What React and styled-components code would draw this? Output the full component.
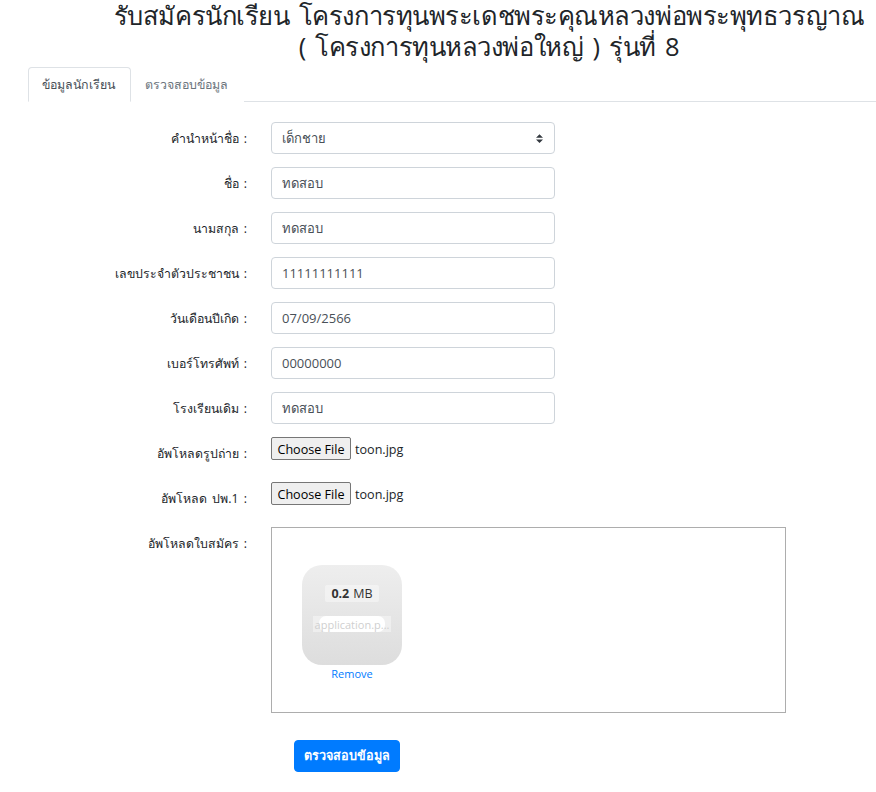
import React from 'react'
import styled, { createGlobalStyle } from 'styled-components'

const GlobalStyle = createGlobalStyle`
    * { box-sizing: border-box; }
    body {
        margin: 0;
        background: #fff;
        color: #212529;
        font-family: "Open Sans", "Noto Sans", "Liberation Sans", sans-serif;
        font-size: 14px;
    }
`;

const Page = styled.div`
    width: 876px;
    height: 792px;
    overflow: hidden;
    padding-left: 28px;
`;
const Title = styled.h3`
    margin: 0;
    padding-left: 74px;
    height: 67px;
    font-size: 25.5px;
    font-weight: 500;
    letter-spacing: -0.45px;
    word-spacing: 3.2px;
    white-space: nowrap;
    text-align: center;
`;
const TitleLine = styled.div`
    height: 31px;
    line-height: 31px;
`;
const Tabs = styled.div`
    display: flex;
    height: 35px;
    border-bottom: 1px solid #dee2e6;
`;
const Tab = styled.div`
    height: 35px;
    padding: 0 15px 0 13px;
    display: flex;
    align-items: center;
    font-size: 12.4px;
    color: ${({active}) => (active ? '#495057' : '#6c757d')};
    background: #fff;
    border: 1px solid ${({active}) => (active ? '#dee2e6' : 'transparent')};
    border-bottom-color: ${({active}) => (active ? '#fff' : 'transparent')};
    border-radius: 4px 4px 0 0;
`;
const Form = styled.form`
    padding-top: 20px;
    display: flex;
    flex-direction: column;
`;
const Row = styled.div`
    display: grid;
    grid-template-columns: 219px 1fr;
    column-gap: 24px;
    height: ${({h}) => h || 45}px;
`;
const Label = styled.label`
    text-align: right;
    font-size: 12.3px;
    word-spacing: 2px;
    line-height: 20px;
    padding-top: 7px;
    color: #212529;
`;
const Input = styled.input`
    display: block;
    width: 284px;
    height: 32px;
    padding: 0 10px;
    font: inherit;
    font-size: 13px;
    color: #495057;
    background: #fff;
    border: 1px solid #ced4da;
    border-radius: 4px;
`;
const Select = styled.select`
    display: block;
    width: 284px;
    height: 32px;
    padding: 0 10px;
    font: inherit;
    font-size: 13px;
    color: #495057;
    border: 1px solid #ced4da;
    border-radius: 4px;
    appearance: none;
    background: #fff url("data:image/svg+xml,%3csvg xmlns='http://www.w3.org/2000/svg' width='4' height='5' viewBox='0 0 4 5'%3e%3cpath fill='%23343a40' d='M2 0L0 2h4zm0 5L0 3h4z'/%3e%3c/svg%3e") no-repeat right 11px center / 7px 9px;
`;
const FileField = styled.div`
    display: flex;
    align-items: flex-start;
    gap: 4px;
    font-family: "Open Sans", sans-serif;
    font-size: 12.6px;
    line-height: 25px;
    color: #212529;
`;
const FileButton = styled.button`
    width: 80px;
    height: 23px;
    padding: 1px 0 0;
    font: inherit;
    line-height: 21px;
    color: #000;
    background: #efefef;
    border: 1px solid #767676;
    border-radius: 2px;
`;
const DropArea = styled.div`
    width: 515px;
    height: 186px;
    padding: 37px 30px;
    border: 1px solid #adadad;
`;
const Preview = styled.div`
    width: 100px;
    display: flex;
    flex-direction: column;
    align-items: center;
`;
const Thumb = styled.div`
    width: 100px;
    height: 100px;
    padding-top: 20px;
    border-radius: 20px;
    background: linear-gradient(to bottom, #eee, #ddd);
    display: flex;
    flex-direction: column;
    align-items: center;
`;
const Size = styled.div`
    height: 17px;
    padding: 0 6px;
    display: flex;
    align-items: center;
    gap: 4px;
    font-size: 12.5px;
    color: #333;
    border-radius: 2px;
    background: rgba(255, 255, 255, 0.4);
    strong { font-weight: 700; }
`;
const FileName = styled.div`
    position: relative;
    width: 78px;
    height: 16px;
    margin-top: 14px;
    display: flex;
    justify-content: center;
    background: rgba(255, 255, 255, 0.4);
    &::before {
        content: "";
        position: absolute;
        top: 0;
        left: 6px;
        width: 66px;
        height: 16px;
        background: #fff;
        border-radius: 7px;
    }
`;
const FileNameText = styled.span`
    position: relative;
    white-space: nowrap;
    font-size: 11px;
    line-height: 17px;
    color: #cfcfcf;
`;
const RemoveLink = styled.a`
    margin-top: 2px;
    font-size: 11px;
    line-height: 14px;
    color: #007bff;
`;
const SubmitRow = styled.div`
    padding: 27px 0 0 266px;
`;
const SubmitButton = styled.button`
    width: 106px;
    height: 32px;
    padding: 0;
    font: inherit;
    font-size: 12.6px;
    font-weight: 700;
    color: #fff;
    background: #007bff;
    border: 1px solid #007bff;
    border-radius: 4px;
`;

const textFields = [
    ['ชื่อ :', 'ทดสอบ'],
    ['นามสกุล :', 'ทดสอบ'],
    ['เลขประจำตัวประชาชน :', '11111111111'],
    ['วันเดือนปีเกิด :', '07/09/2566'],
    ['เบอร์โทรศัพท์ :', '00000000'],
    ['โรงเรียนเดิม :', 'ทดสอบ'],
];

export default function App() {
    return (
        <Page>
            <GlobalStyle />
            <Title>
                <TitleLine>รับสมัครนักเรียน โครงการทุนพระเดชพระคุณหลวงพ่อพระพุทธวรญาณ</TitleLine>
                <TitleLine>( โครงการทุนหลวงพ่อใหญ่ ) รุ่นที่ 8</TitleLine>
            </Title>
            <Tabs>
                <Tab active>ข้อมูลนักเรียน</Tab>
                <Tab>ตรวจสอบข้อมูล</Tab>
            </Tabs>
            <Form>
                <Row>
                    <Label>คำนำหน้าชื่อ :</Label>
                    <Select defaultValue="เด็กชาย">
                        <option>เด็กชาย</option>
                    </Select>
                </Row>
                {textFields.map(([label, value]) => (
                    <Row key={label}>
                        <Label>{label}</Label>
                        <Input defaultValue={value} />
                    </Row>
                ))}
                <Row>
                    <Label>อัพโหลดรูปถ่าย :</Label>
                    <FileField><FileButton type="button">Choose File</FileButton>toon.jpg</FileField>
                </Row>
                <Row>
                    <Label>อัพโหลด ปพ.1 :</Label>
                    <FileField><FileButton type="button">Choose File</FileButton>toon.jpg</FileField>
                </Row>
                <Row h={186}>
                    <Label>อัพโหลดใบสมัคร :</Label>
                    <DropArea>
                        <Preview>
                            <Thumb>
                                <Size><strong>0.2</strong> MB</Size>
                                <FileName><FileNameText>application.p...</FileNameText></FileName>
                            </Thumb>
                            <RemoveLink>Remove</RemoveLink>
                        </Preview>
                    </DropArea>
                </Row>
                <SubmitRow>
                    <SubmitButton type="button">ตรวจสอบข้อมูล</SubmitButton>
                </SubmitRow>
            </Form>
        </Page>
    )
}
